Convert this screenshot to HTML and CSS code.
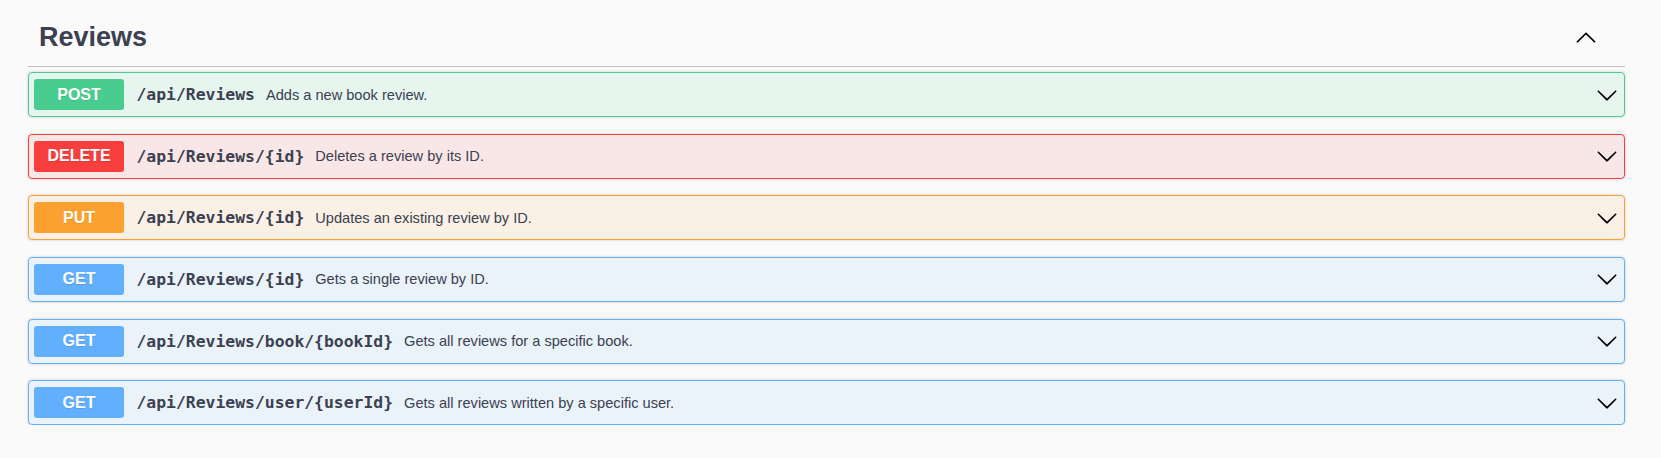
FILE: index.html
```html
<!DOCTYPE html>
<html>
<head>
<meta charset="utf-8">
<link rel="stylesheet" href="styles.css">
</head>
<body>
<div class="wrapper">
  <div class="tag-section">
    <div class="tag-header">
      <h3 class="tag-title">Reviews</h3>
      <button class="expand-btn" aria-label="collapse">
        <svg class="arrow" width="22" height="22" viewBox="0 0 20 20"><path d="M17.418 14.891c.272.268.709.268.979 0s.271-.701 0-.969l-7.908-7.83c-.27-.268-.707-.268-.979 0l-7.908 7.83c-.27.268-.27.701 0 .969.271.268.709.268.979 0L10 7.75l7.418 7.141z"/></svg>
      </button>
    </div>
    <div class="opblocks">
      <div class="opblock post">
        <span class="method">POST</span>
        <span class="path">/api/Reviews</span>
        <span class="desc">Adds a new book review.</span>
        <svg class="arrow down" width="22" height="22" viewBox="0 0 20 20"><path d="M17.418 6.109c.272-.268.709-.268.979 0s.271.701 0 .969l-7.908 7.83c-.27.268-.707.268-.979 0l-7.908-7.83c-.27-.268-.27-.701 0-.969.271-.268.709-.268.979 0L10 13.25l7.418-7.141z"/></svg>
      </div>
      <div class="opblock delete">
        <span class="method">DELETE</span>
        <span class="path">/api/Reviews/{id}</span>
        <span class="desc">Deletes a review by its ID.</span>
        <svg class="arrow down" width="22" height="22" viewBox="0 0 20 20"><path d="M17.418 6.109c.272-.268.709-.268.979 0s.271.701 0 .969l-7.908 7.83c-.27.268-.707.268-.979 0l-7.908-7.83c-.27-.268-.27-.701 0-.969.271-.268.709-.268.979 0L10 13.25l7.418-7.141z"/></svg>
      </div>
      <div class="opblock put">
        <span class="method">PUT</span>
        <span class="path">/api/Reviews/{id}</span>
        <span class="desc">Updates an existing review by ID.</span>
        <svg class="arrow down" width="22" height="22" viewBox="0 0 20 20"><path d="M17.418 6.109c.272-.268.709-.268.979 0s.271.701 0 .969l-7.908 7.83c-.27.268-.707.268-.979 0l-7.908-7.83c-.27-.268-.27-.701 0-.969.271-.268.709-.268.979 0L10 13.25l7.418-7.141z"/></svg>
      </div>
      <div class="opblock get">
        <span class="method">GET</span>
        <span class="path">/api/Reviews/{id}</span>
        <span class="desc">Gets a single review by ID.</span>
        <svg class="arrow down" width="22" height="22" viewBox="0 0 20 20"><path d="M17.418 6.109c.272-.268.709-.268.979 0s.271.701 0 .969l-7.908 7.83c-.27.268-.707.268-.979 0l-7.908-7.83c-.27-.268-.27-.701 0-.969.271-.268.709-.268.979 0L10 13.25l7.418-7.141z"/></svg>
      </div>
      <div class="opblock get">
        <span class="method">GET</span>
        <span class="path">/api/Reviews/book/{bookId}</span>
        <span class="desc">Gets all reviews for a specific book.</span>
        <svg class="arrow down" width="22" height="22" viewBox="0 0 20 20"><path d="M17.418 6.109c.272-.268.709-.268.979 0s.271.701 0 .969l-7.908 7.83c-.27.268-.707.268-.979 0l-7.908-7.83c-.27-.268-.27-.701 0-.969.271-.268.709-.268.979 0L10 13.25l7.418-7.141z"/></svg>
      </div>
      <div class="opblock get">
        <span class="method">GET</span>
        <span class="path">/api/Reviews/user/{userId}</span>
        <span class="desc">Gets all reviews written by a specific user.</span>
        <svg class="arrow down" width="22" height="22" viewBox="0 0 20 20"><path d="M17.418 6.109c.272-.268.709-.268.979 0s.271.701 0 .969l-7.908 7.83c-.27.268-.707.268-.979 0l-7.908-7.83c-.27-.268-.27-.701 0-.969.271-.268.709-.268.979 0L10 13.25l7.418-7.141z"/></svg>
      </div>
    </div>
  </div>
</div>
</body>
</html>
```

FILE: styles.css
```css
html, body {
  margin: 0;
  padding: 0;
  background: #fafafa;
  font-family: "Liberation Sans", Arial, sans-serif;
  color: #3b4151;
}

.wrapper {
  padding: 8px 0 0 28px;
  width: 1597px;
}

.tag-header {
  display: flex;
  align-items: center;
  height: 58px;
  border-bottom: 1px solid rgba(59, 65, 81, 0.3);
  margin-bottom: 5px;
}

.tag-title {
  flex: 1;
  margin: 0;
  padding-left: 11px;
  font-size: 27px;
  font-weight: 700;
  color: #3b4151;
}

.expand-btn {
  border: none;
  background: none;
  padding: 0;
  margin-right: 28px;
  display: flex;
  cursor: pointer;
}

.arrow {
  display: block;
  fill: #000;
}

.opblocks {
  display: flex;
  flex-direction: column;
  gap: 16.66px;
}

.opblock {
  display: flex;
  align-items: center;
  height: 45px;
  box-sizing: border-box;
  padding: 6px 6px 6px 5px;
  border: 1px solid;
  border-radius: 4px;
  box-shadow: 0 0 3px rgba(0, 0, 0, 0.19);
}

.method {
  width: 90px;
  height: 31px;
  flex: none;
  display: flex;
  align-items: center;
  justify-content: center;
  border-radius: 3px;
  color: #fff;
  font-size: 16px;
  font-weight: 700;
  text-shadow: 0 1px 0 rgba(0, 0, 0, 0.1);
}

.path {
  padding: 0 11px 0 12.5px;
  font-family: "DejaVu Sans Mono", "Liberation Mono", monospace;
  font-size: 16.4px;
  font-weight: 700;
  color: #3b4151;
}

.desc {
  flex: 1;
  font-size: 14.6px;
  color: #3b4151;
}

.post { background: rgba(73, 204, 144, 0.1); border-color: #49cc90; }
.post .method { background: #49cc90; }
.delete { background: rgba(249, 62, 62, 0.1); border-color: #f93e3e; }
.delete .method { background: #f93e3e; }
.put { background: rgba(252, 161, 48, 0.1); border-color: #fca130; }
.put .method { background: #fca130; }
.get { background: rgba(97, 175, 254, 0.1); border-color: #61affe; }
.get .method { background: #61affe; }
```
